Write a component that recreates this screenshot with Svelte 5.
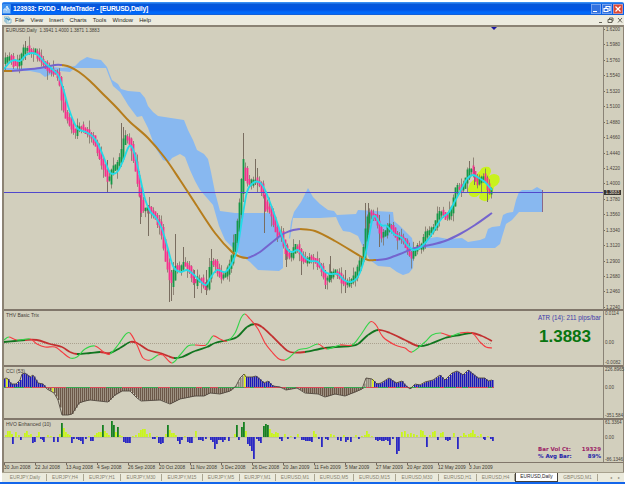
<script lang="ts">
	type Point = [number, number];

	const menus = ['File', 'View', 'Insert', 'Charts', 'Tools', 'Window', 'Help'];
	const prices = ['1.6200', '1.5980', '1.5760', '1.5540', '1.5320', '1.5100', '1.4880', '1.4660', '1.4440', '1.4220', '1.4000', '1.3780', '1.3560', '1.3340', '1.3120', '1.2900', '1.2680', '1.2460', '1.2240'];
	const dates = ['30 Jun 2008', '22 Jul 2008', '13 Aug 2008', '4 Sep 2008', '26 Sep 2008', '20 Oct 2008', '11 Nov 2008', '3 Dec 2008', '26 Dec 2008', '20 Jan 2009', '11 Feb 2009', '5 Mar 2009', '27 Mar 2009', '20 Apr 2009', '12 May 2009', '3 Jun 2009'];
	const tabs = ['EURJPY,Daily', 'EURJPY,H4', 'EURJPY,H1', 'EURJPY,M30', 'EURJPY,M15', 'EURJPY,M5', 'EURJPY,M1', 'EURUSD,M1', 'EURUSD,M5', 'EURUSD,M15', 'EURUSD,M30', 'EURUSD,H1', 'EURUSD,H4', 'EURUSD,Daily', 'GBPUSD,M1'];
	const tabWidths = [43, 37, 37, 41, 41, 37, 36, 39, 39, 42, 43, 38, 38, 43, 40];

	const closes = pts('4,61 7,58 10,57 13,64 17,65 20,57 23,50 26,48 29,51 32,53 35,51 38,58 41,61 45,66 48,71 52,71 55,73 58,78 60,90 62,105 65,117 68,120 71,128 74,133 77,128 80,127 84,130 88,134 92,138 95,145 98,155 102,165 105,175 108,183 110,172 113,168 117,163 120,158 122,142 124,137 127,139 130,145 133,158 136,176 139,195 141,210 144,209 148,208 151,213 154,216 157,222 160,228 162,240 164,254 167,268 170,284 172,279 174,266 177,269 180,268 183,263 186,266 189,270 192,280 194,283 197,279 200,280 203,285 206,288 208,277 210,262 214,262 217,272 220,277 224,275 227,270 230,262 233,245 236,230 239,205 241,180 243,160 245,178 248,184 251,182 254,180 257,182 260,186 263,195 265,210 268,207 271,215 274,228 277,236 280,232 283,245 286,254 289,257 292,252 295,245 298,250 301,258 304,262 308,258 311,258 315,262 319,266 322,273 325,282 328,277 331,273 335,272 339,277 342,282 345,284 349,282 353,278 356,270 359,263 362,256 364,240 366,222 368,213 371,214 374,217 377,224 380,236 384,234 387,226 390,226 393,232 396,238 399,237 402,239 405,245 408,253 411,257 414,250 417,246 420,248 423,238 426,232 430,231 433,228 436,218 439,212 442,213 446,218 449,213 452,205 454,192 457,186 461,190 464,182 467,172 470,168 473,174 476,183 479,181 482,176 485,180 488,193 492,190');
	const fastMa = pts('4,69 10,62 15,60 20,61 26,55 32,53 38,55 44,62 52,69 58,75 63,88 68,106 73,120 78,129 86,132 92,136 98,144 104,158 109,171 113,174 118,171 123,161 128,148 131,146 135,155 140,177 145,199 150,211 156,218 162,229 168,249 173,266 180,272 187,270 193,274 200,281 206,285 211,277 217,270 225,272 231,265 237,250 242,220 247,192 253,183 259,182 264,188 271,205 277,222 282,236 287,249 292,252 298,250 304,257 310,261 318,262 324,271 330,274 338,274 344,280 351,282 357,278 362,267 367,247 372,221 375,216 381,225 387,226 394,234 402,238 408,246 414,250 421,247 430,237 437,225 443,217 449,212 455,201 460,192 467,179 473,175 479,178 485,182 492,190');
	// Long single-day ranges: x, high, low
	const spikes = [[25, 41, 60], [107, 160, 192], [121, 123, 165], [123, 127, 155], [140, 195, 224], [148, 205, 236], [169, 268, 302], [171, 270, 301], [175, 234, 275], [183, 247, 272], [194, 270, 298], [206, 270, 295], [211, 249, 275], [243, 133, 183], [255, 159, 185], [257, 168, 185], [264, 195, 233], [286, 245, 267], [301, 255, 275], [325, 270, 289], [330, 256, 280], [345, 270, 293], [365, 203, 250], [368, 203, 235], [379, 215, 247], [469, 161, 180], [474, 167, 185], [487, 177, 202]];

	const slowMa = [
		{ color: '#b67d1c', points: pts('4,71 12,71') },
		{ color: '#7464ce', points: pts('12,71 22,70 40,68 55,65 62,65') },
		{ color: '#b67d1c', points: pts('62,65 70,67 79,72 90,81 105,96 117,108 130,122 148,138 165,158 180,180 195,203 215,233 232,252 241,257 248,258') },
		{ color: '#7464ce', points: pts('248,258 260,252 280,236 290,231 300,229') },
		{ color: '#b67d1c', points: pts('300,229 315,231 335,241 360,256 368,260 376,260') },
		{ color: '#7464ce', points: pts('376,260 386,259 400,254 415,248 430,245 445,241 460,234 475,225 492,213') }
	];

	const clouds = [
		'4,68 35,68 52,67 62,68 75,66 80,61 87,57 94,59 101,60 107,67 110,75 112,80 118,84 121,89 128,91 140,92 145,98 148,106 153,112 158,116 184,120 188,130 193,140 197,150 204,154 208,159 211,172 215,192 220,211 235,213 270,213 276,222 280,230 283,240 283,268 279,271 258,270 250,262 240,255 225,240 219,226 213,205 207,198 200,190 195,181 190,170 185,157 180,154 172,158 169,162 163,160 155,147 148,128 142,116 137,117 128,105 125,100 120,92 113,86 109,76 106,68 75,68 70,72 60,71 52,74 45,77 40,73 30,71 4,71',
		'289,238 291,222 294,212 301,202 308,188 313,197 320,204 328,210 334,211 337,215 356,214 358,210 393,212 394,221 400,226 405,231 412,238 414,250 413,268 409,273 403,275 397,272 390,267 378,266 370,260 362,245 358,236 350,232 343,231 339,224 336,217 320,218 293,218 290,239',
		'413,250 423,245 430,238 437,237 448,239 462,238 468,242 480,240 485,238 488,229 492,227 500,226 503,215 507,213 513,212 516,200 519,192 522,190 532,190 537,187 542,190 542,212 519,212 512,220 506,224 502,237 500,244 495,248 422,248'
	];

	const slowTrix = pts('4,342 15,341 25,340 37,340 50,344 62,347 70,352 77,354 90,353 100,352 110,353 120,348 130,342 137,343 148,350 160,353 168,356 174,358 182,357 195,351 207,347 215,343 228,340 237,337 247,327 255,324 262,327 272,336 282,346 290,352 305,352 325,348 350,346 358,344 368,335 378,330 390,333 405,340 418,346 430,344 445,338 460,335 472,333 482,336 492,341');
	const fastTrix = pts('4,340 9,337 17,340 30,339 37,344 45,347 55,347 62,352 70,358 77,357 85,349 95,346 105,353 110,354 118,345 125,335 130,333 137,345 143,358 150,360 158,355 163,355 172,363 180,355 188,346 195,345 206,345 213,336 220,339 227,341 235,333 241,318 245,314 250,319 258,329 265,343 272,352 279,359 285,360 290,357 298,350 308,348 318,344 327,349 340,345 352,345 360,336 370,322 376,325 383,337 395,345 405,348 412,352 425,342 432,335 441,333 451,336 460,333 472,333 480,342 486,347 492,348');

	const cci = pts('4,379 6,378 8,379 11,384 16,384 20,380 22,374 25,373 30,377 33,375 38,383 43,384 47,389 54,393 58,400 62,415 68,415 72,414 79,403 85,401 90,400 108,402 115,395 122,391 130,391 137,398 141,401 160,400 170,404 180,399 195,396 204,396 210,393 220,394 230,391 236,386 240,378 244,374 246,377 252,377 256,376 262,381 264,383 268,381 273,386 280,387 286,390 297,388 305,393 318,394 325,397 335,394 345,396 355,392 362,389 366,378 372,379 377,384 381,383 389,378 396,383 402,381 405,385 410,389 415,384 420,385 425,382 433,380 440,375 445,380 452,373 457,371 463,375 468,370 473,374 478,378 485,378 488,381 492,380');

	const volume = pts('5,2 7,6 9,6 11,3 12,-7 15,5 18,2 20,-3 24,4 26,6 28,2 30,3 32,-6 34,-5 36,1 38,5 40,-2 42,-3 43,-5 47,2 50,1 53,-5 57,-5 59,3 61,14 63,9 65,5 67,3 69,2 71,-6 73,-2 76,-2 78,-3 80,-4 82,-7 85,-2 88,1 90,-4 92,-4 94,2 96,4 98,5 100,5 102,12 104,6 106,4 108,2 111,16 113,12 115,5 117,10 119,2 121,1 123,-5 125,-6 127,-6 129,-6 132,1 135,2 138,4 140,7 142,8 144,8 146,3 149,4 152,-2 154,-2 156,1 158,-6 160,-7 162,-6 165,3 167,12 169,7 171,4 173,4 175,2 177,-4 179,-7 181,-3 184,1 187,-5 189,-6 191,-6 195,6 198,-3 200,-3 202,-4 205,-2 210,-3 212,-5 214,-12 216,-7 218,-3 220,-3 222,-5 224,-3 228,-4 234,3 236,12 238,-3 241,10 243,15 245,6 247,-7 249,-9 251,-14 253,-22 256,-2 258,-4 260,-6 263,11 265,13 267,12 269,8 271,4 273,3 275,5 277,4 279,-2 281,-4 284,3 287,-2 290,1 294,-2 297,3 301,-3 303,-3 305,-4 307,-4 309,-4 311,-5 313,6 315,3 318,-2 321,-10 325,-2 327,-3 330,3 333,2 337,-3 340,-4 343,2 345,-5 347,-3 350,-5 355,2 358,-2 361,1 364,2 366,6 368,3 371,1 375,-3 377,-4 379,-3 381,-4 383,-4 385,-3 387,-4 389,-8 392,-2 396,-17 398,-14 401,5 404,6 407,3 410,4 413,3 416,2 420,7 422,6 424,2 426,-10 429,2 432,5 434,6 437,-3 440,4 442,5 445,-3 447,-4 449,-3 453,4 457,-12 460,1 463,4 465,2 468,3 470,4 472,7 474,3 477,1 480,3 483,-2 484,-3 487,1 490,-2 492,-4');

	function pts(text: string): Point[] {
		return text.split(' ').map((pair) => pair.split(',').map(Number) as Point);
	}

	function valueAt(list: Point[], x: number) {
		const i = list.findIndex((p) => p[0] >= x);
		if (i <= 0) return list[i === 0 ? 0 : list.length - 1][1];
		const [x0, y0] = list[i - 1];
		const [x1, y1] = list[i];
		return y0 + ((y1 - y0) * (x - x0)) / (x1 - x0);
	}

	// Cubic segment through p[i] and p[i + 1]
	function curve(p: Point[], i: number) {
		const a = p[i - 1] ?? p[i];
		const b = p[i];
		const c = p[i + 1];
		const d = p[i + 2] ?? c;
		return `C${b[0] + (c[0] - a[0]) / 6} ${b[1] + (c[1] - a[1]) / 6} ${c[0] - (d[0] - b[0]) / 6} ${c[1] - (d[1] - b[1]) / 6} ${c[0]} ${c[1]}`;
	}

	function smooth(p: Point[]) {
		return `M${p[0]}` + p.slice(1).map((_, i) => curve(p, i)).join('');
	}

	function trend(p: Point[], up: string, down: string) {
		return p.slice(1).map((q, i) => ({
			d: `M${p[i]}${curve(p, i)}`,
			color: q[1] < p[i][1] ? up : down
		}));
	}

	const candles = Array.from({ length: 244 }, (_, i) => {
		const x = 5 + i * 2;
		const y = valueAt(closes, x);
		const prev = valueAt(closes, x - 3);
		const up = y < prev;
		const top = Math.min(y, prev) - (i % 3 === 0 ? 2.5 : 1);
		const bottom = Math.max(y, prev) + (i % 4 === 0 ? 3 : 1.5);
		const high = top - ((i * 7) % 5) - (i % 6 === 0 ? 5 : 0);
		const low = bottom + ((i * 3) % 5) + (i % 7 === 0 ? 6 : 0);
		return { x, up, top, bottom, high, low };
	});

	const cciBars = Array.from({ length: 245 }, (_, i) => {
		const x = 4 + i * 2;
		const y = valueAt(cci, x);
		let color = y > 387 ? '#6b5748' : '#1a17b8';
		if (y <= 387 && ((x > 235 && x < 243) || (x > 362 && x < 371))) color = '#918a7c';
		if ([6, 52, 244, 372].includes(x)) color = '#d9ee14';
		return { x, y, color, tick: valueAt(cci, x + 3) < y ? '#38a850' : '#d84a58' };
	});

	function volumeColor(v: number) {
		if (v < 0) return '#2a27c4';
		return v > 9 ? '#168021' : '#c9f51e';
	}
</script>

<div class="window">
	<header class="titlebar">
		<svg class="logo" viewBox="0 0 9 10">
			<rect width="9" height="10" rx="1" fill="#3e91ef" />
			<path d="M1 8h7M2 7V5h2v2m1 0V4l2 1v2M4 4l1-2 1 2" fill="none" stroke="#e4f5ff" />
		</svg>
		<h1>123933: FXDD - MetaTrader - [EURUSD,Daily]</h1>
		<div class="controls">
			<svg viewBox="0 0 10 10"><path d="M2 7.5h4" /></svg>
			<svg viewBox="0 0 10 10"><path d="M4 4V2.5h4v4H7M2 4.5h4v3H2z" /></svg>
			<svg class="close" viewBox="0 0 10 10"><path d="M2.5 2.5l5 5m0-5l-5 5" /></svg>
		</div>
	</header>

	<nav class="menu">
		<svg class="menu-icon" viewBox="0 0 8 8">
			<path d="M0 1h5v4H0zM2 3h5v4H2z" fill="#edf7f5" stroke="#70aac5" stroke-width=".8" />
			<path d="M1 3l2-1 1 2 2-1" fill="none" stroke="#288bc2" />
		</svg>
		{#each menus as item}
			<span>{item}</span>
		{/each}
		<div class="child-controls">
			<svg viewBox="0 0 7 7"><path d="M1 5.5h3" /></svg>
			<svg viewBox="0 0 7 7"><path d="M2.5 2V1H6v3H5M1 2.5h4v3H1z" /></svg>
			<svg viewBox="0 0 7 7"><path d="M2 1l4 4.5M6 1L2 5.5" /></svg>
		</div>
	</nav>

	<main class="charts">
		<section class="pane price">
			<svg class="plot" viewBox="4 27 599 282">
				{#each clouds as cloud}
					<polygon points={cloud} fill="#88b8f0" />
				{/each}
				<path d="M542.5 190v22" stroke="#8a6788" />
				<path d="M480 171q2-5 9-4 4 3 0 9 5-4 10 0 3 7-5 11-1 7-5 13-6 3-10-2 1-6 3-8-3 8-9 7-5-1-5-8 2-8 7-10 1-5 5-8z" fill="#c9f21e" />
				{#each spikes as [x, high, low]}
					<path d="M{x + 0.5} {high}V{low}" stroke="#796d60" />
				{/each}
				{#each candles as c}
					<path d="M{c.x + 0.5} {c.high}V{c.low}" stroke="#7d7264" stroke-width=".8" />
					<rect x={c.x - 0.4} y={c.top} width="1.8" height={c.bottom - c.top} fill={c.up ? '#149848' : '#f5308d'} />
				{/each}
				<rect x="4" y="192" width="599" height="1" fill="#5048cc" />
				{#each slowMa as line}
					<path class="average" d={smooth(line.points)} stroke={line.color} />
				{/each}
				<path d={smooth(fastMa)} fill="none" stroke="#22dbe8" stroke-width="1.8" />
				<path d="M491 27h6l-3 3z" fill="#1816a3" />
			</svg>
			<p class="caption">EURUSD,Daily&nbsp; 1.3941 1.4000 1.3871 1.3883</p>
			<div class="axis">
				{#each prices as price}
					<span>{price}</span>
				{/each}
				<b class="current">1.3883</b>
			</div>
		</section>

		<section class="pane trix">
			<svg class="plot" viewBox="4 311 599 54">
				<path d="M4 343.5h488" stroke="#aaa18e" stroke-dasharray="1 1" />
				{#each trend(slowTrix, '#11751f', '#c23030') as part}
					<path class="slow" d={part.d} stroke={part.color} />
				{/each}
				{#each trend(fastTrix, '#35d44a', '#f53b40') as part}
					<path class="fast" d={part.d} stroke={part.color} />
				{/each}
			</svg>
			<p class="caption">THV Basic Trix</p>
			<div class="readout">
				<span>ATR (14): 211 pips/bar</span>
				<strong>1.3883</strong>
			</div>
			<div class="axis"><span>0.0114</span><span class="zero">0.00</span><span>-0.0082</span></div>
		</section>

		<section class="pane cci">
			<svg class="plot" viewBox="4 367 599 51">
				{#each cciBars as bar}
					<rect x={bar.x} y={Math.min(bar.y, 387)} width="1.5" height={Math.abs(bar.y - 387)} fill={bar.color} />
					<rect x={bar.x} y="387" width="2" height="1" fill={bar.tick} />
				{/each}
				<polyline points={cci.join(' ')} fill="none" stroke="#51483f" stroke-width=".9" />
			</svg>
			<p class="caption">CCI (53)</p>
			<div class="axis"><span>226.8965</span><span class="zero">0.00</span><span>-351.584</span></div>
		</section>

		<section class="pane hvo">
			<svg class="plot" viewBox="4 420 599 42">
				<path d="M4 437.5h488" stroke="#b5b29a" stroke-width=".6" />
				{#each volume as [x, v]}
					<rect {x} y={v > 0 ? 437 - v : 437} width="1.8" height={Math.abs(v)} fill={volumeColor(v)} />
				{/each}
			</svg>
			<p class="caption">HVO Enhanced (10)</p>
			<dl>
				<div><dt>Bar Vol Ct:</dt><dd>19329</dd></div>
				<div class="avg"><dt>% Avg Bar:</dt><dd>89%</dd></div>
			</dl>
			<div class="axis"><span>61.3364</span><span class="zero">0.00</span><span>-86.1346</span></div>
		</section>

		<div class="dates">
			{#each dates as date}
				<span>{date}</span>
			{/each}
		</div>
	</main>

	<footer class="tabs">
		{#each tabs as tab, i}
			<span class:active={tab === 'EURUSD,Daily'} style="width: {tabWidths[i]}px">{tab}</span>
		{/each}
		<div class="arrows"><i>◂</i><i>▸</i></div>
	</footer>
</div>

<style>
	:global(body) {
		background: #fff;
		font-family: 'Liberation Sans', Arial, sans-serif;
	}
	.window {
		box-sizing: border-box;
		width: 625px;
		height: 484px;
		padding: 2px 1px 0 2px;
		display: grid;
		grid-template-rows: 13px 10px 447px 10px;
		background: #fff;
		border-bottom: 2px solid #1466ea;
		overflow: hidden;
	}
	svg {
		display: block;
	}
	.titlebar {
		display: flex;
		align-items: center;
		background: linear-gradient(#388ef3 0 1px, #0756d9 2px, #0055e5 8px, #0069fa 10px 12px, #2257ba);
		border-radius: 2px 2px 0 0;
		color: #fff;
	}
	.logo {
		width: 9px;
		height: 10px;
	}
	h1 {
		margin: 0 0 0 2px;
		font: bold 6.8px/12px 'Liberation Sans', Arial, sans-serif;
		letter-spacing: -0.24px;
		white-space: nowrap;
	}
	.controls {
		display: flex;
		gap: 1px;
		margin-left: auto;
		margin-right: 1px;
	}
	.controls svg {
		width: 10px;
		height: 10px;
		background: #3472df;
		border-radius: 1px;
		box-shadow: inset 0 0 0 0.5px #b7d0fa;
	}
	.controls .close {
		background: #dd4936;
	}
	.controls path {
		fill: none;
		stroke: #fff;
		stroke-width: 1.2;
	}
	.menu {
		display: flex;
		align-items: center;
		background: #ecebdf;
		font-size: 5.8px;
		line-height: 9px;
		color: #292923;
	}
	.menu-icon {
		width: 8px;
		height: 8px;
		margin: 0 3px 0 2px;
	}
	.menu span {
		margin-right: 6.1px;
	}
	.child-controls {
		display: flex;
		gap: 2px;
		margin-left: auto;
		margin-right: 1px;
	}
	.child-controls svg {
		width: 7px;
		height: 7px;
	}
	.child-controls path {
		fill: none;
		stroke: #555247;
		stroke-width: 0.9;
	}
	.charts {
		display: grid;
		grid-template-rows: 284px 56px 53px 43px 9px;
		border: solid #8c8374;
		border-width: 2px 1px 0 2px;
		border-top-color: #8b8375;
		background: #d2cfbd;
		min-width: 0;
	}
	.pane {
		position: relative;
		display: grid;
		grid-template-columns: 599px 1fr;
		border-bottom: 2px solid #81776b;
		box-sizing: border-box;
		min-height: 0;
	}
	.hvo {
		border-bottom-width: 1px;
	}
	.plot {
		width: 599px;
		height: 100%;
		box-sizing: border-box;
	}
	.average {
		fill: none;
		stroke-width: 2;
	}
	.slow {
		fill: none;
		stroke-width: 1.8;
	}
	.fast {
		fill: none;
		stroke-width: 1.1;
	}
	.caption {
		position: absolute;
		left: 2px;
		top: 1px;
		margin: 0;
		font-size: 5px;
		line-height: 6px;
		color: #454038;
	}
	.price .caption {
		font-size: 4.6px;
	}
	.axis {
		position: relative;
		display: flex;
		flex-direction: column;
		justify-content: space-between;
		border-left: 1px solid #8a8376;
		font-size: 4.6px;
		line-height: 5px;
		color: #48433b;
		white-space: nowrap;
	}
	.price .axis {
		margin-bottom: -1px;
	}
	.axis span {
		padding-left: 1px;
		margin-right: -3px;
	}
	.axis .zero {
		margin-bottom: auto;
	}
	.trix .zero {
		margin-top: 24px;
	}
	.cci .zero {
		margin-top: 12.5px;
	}
	.hvo .zero {
		margin-top: 9.5px;
	}
	.price .axis span::before {
		content: '';
		display: inline-block;
		width: 1px;
		height: 1px;
		margin: 0 1px 1px -1px;
		background: #716b60;
	}
	.current {
		position: absolute;
		left: 0;
		top: 163px;
		width: 17px;
		background: #37342f;
		color: #e3dfd1;
		font-weight: normal;
		text-align: center;
	}
	.readout {
		position: absolute;
		right: 21px;
		top: 3px;
		width: 64px;
		display: flex;
		flex-direction: column;
		font-size: 6.3px;
		line-height: 7px;
		color: #403bab;
		white-space: nowrap;
	}
	.readout strong {
		padding-left: 1px;
		margin-top: 7px;
		font-size: 17px;
		line-height: 17px;
		color: #08750f;
	}
	dl {
		position: absolute;
		right: 22px;
		bottom: 2px;
		width: 63px;
		margin: 0;
		font: bold 5.5px/7px 'DejaVu Sans', sans-serif;
		color: #9b2366;
	}
	dl div {
		display: flex;
		justify-content: space-between;
		white-space: nowrap;
	}
	dd {
		margin: 0;
	}
	.avg {
		color: #2524a8;
	}
	.dates {
		display: grid;
		grid-template-columns: repeat(16, 31px);
		font-size: 4.8px;
		line-height: 9px;
		color: #403b33;
		white-space: nowrap;
	}
	.dates span {
		box-sizing: border-box;
		background: linear-gradient(#71695e, #71695e) 0 0 / 1px 2px no-repeat;
	}
	.tabs {
		display: flex;
		align-items: center;
		padding-left: 2px;
		background: #ebeadc;
		border-top: 1px solid #a8a28f;
		box-sizing: border-box;
		font-size: 4.8px;
		line-height: 7px;
		color: #86816f;
		white-space: nowrap;
	}
	.tabs span {
		box-sizing: border-box;
		flex: none;
		text-align: center;
		border-right: 1px solid #aaa591;
	}
	.tabs .active {
		align-self: stretch;
		background: #fff;
		border: solid #45413a;
		border-width: 0 1px 1px;
		line-height: 8px;
		color: #24221e;
	}
	.arrows {
		display: flex;
		gap: 6px;
		margin: 0 4px 0 auto;
		font-size: 4px;
	}
	.arrows i {
		font-style: normal;
	}
</style>
